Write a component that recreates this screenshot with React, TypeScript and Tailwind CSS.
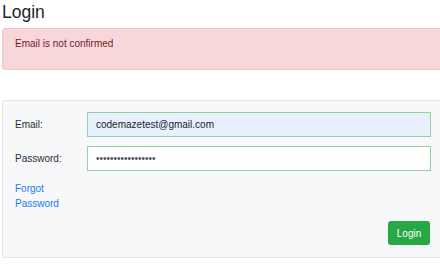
export default function App() {
  return (
    <div className="w-[440px] h-[264px] overflow-hidden bg-white font-['Liberation_Sans',Arial,sans-serif] text-[10px] leading-[15px] text-[#2b2f33]">
      <div className="ml-[2px] w-[442px] pt-[2px]">
        <h3 className="mb-[5px] text-[17.5px] leading-[21px] font-normal text-[#212529]">Login</h3>

        <div className="h-[42px] rounded-l-[3px] border border-[#f5c6cb] bg-[#f8d7da] pl-[12px] pt-[7px] text-[#721c24]">
          Email is not confirmed
        </div>

        <form
          className="mt-[30px] rounded-l-[3px] border border-[#e3e5e8] bg-[#f7f8fa] pl-[12px] pr-[12px] pt-[11px] pb-[12px]"
          onSubmit={(e) => e.preventDefault()}
        >
          <div className="mb-[9px] flex items-center">
            <label className="w-[72px] shrink-0">Email:</label>
            <input
              type="text"
              readOnly
              defaultValue="codemazetest@gmail.com"
              className="h-[25px] flex-1 border border-[#92d3a1] bg-[#e8f0fe] pl-[8px] text-[10px] text-[#212529] outline-none"
            />
          </div>
          <div className="mb-[10px] flex items-center">
            <label className="w-[72px] shrink-0">Password:</label>
            <input
              type="password"
              readOnly
              defaultValue="codemazetest12345"
              className="h-[25px] flex-1 border border-[#92d3a1] bg-white pl-[8px] text-[10px] text-[#495057] outline-none"
            />
          </div>
          <div>
            <a href="#" className="block w-[60px] text-[#1a7cf0]">
              Forgot Password
            </a>
          </div>
          <div className="mt-[10px] flex justify-end pr-[1px]">
            <button
              type="submit"
              className="h-[24px] w-[42px] rounded-[3px] bg-[#28a745] text-[10px] text-white"
            >
              Login
            </button>
          </div>
        </form>
      </div>
    </div>
  );
}
